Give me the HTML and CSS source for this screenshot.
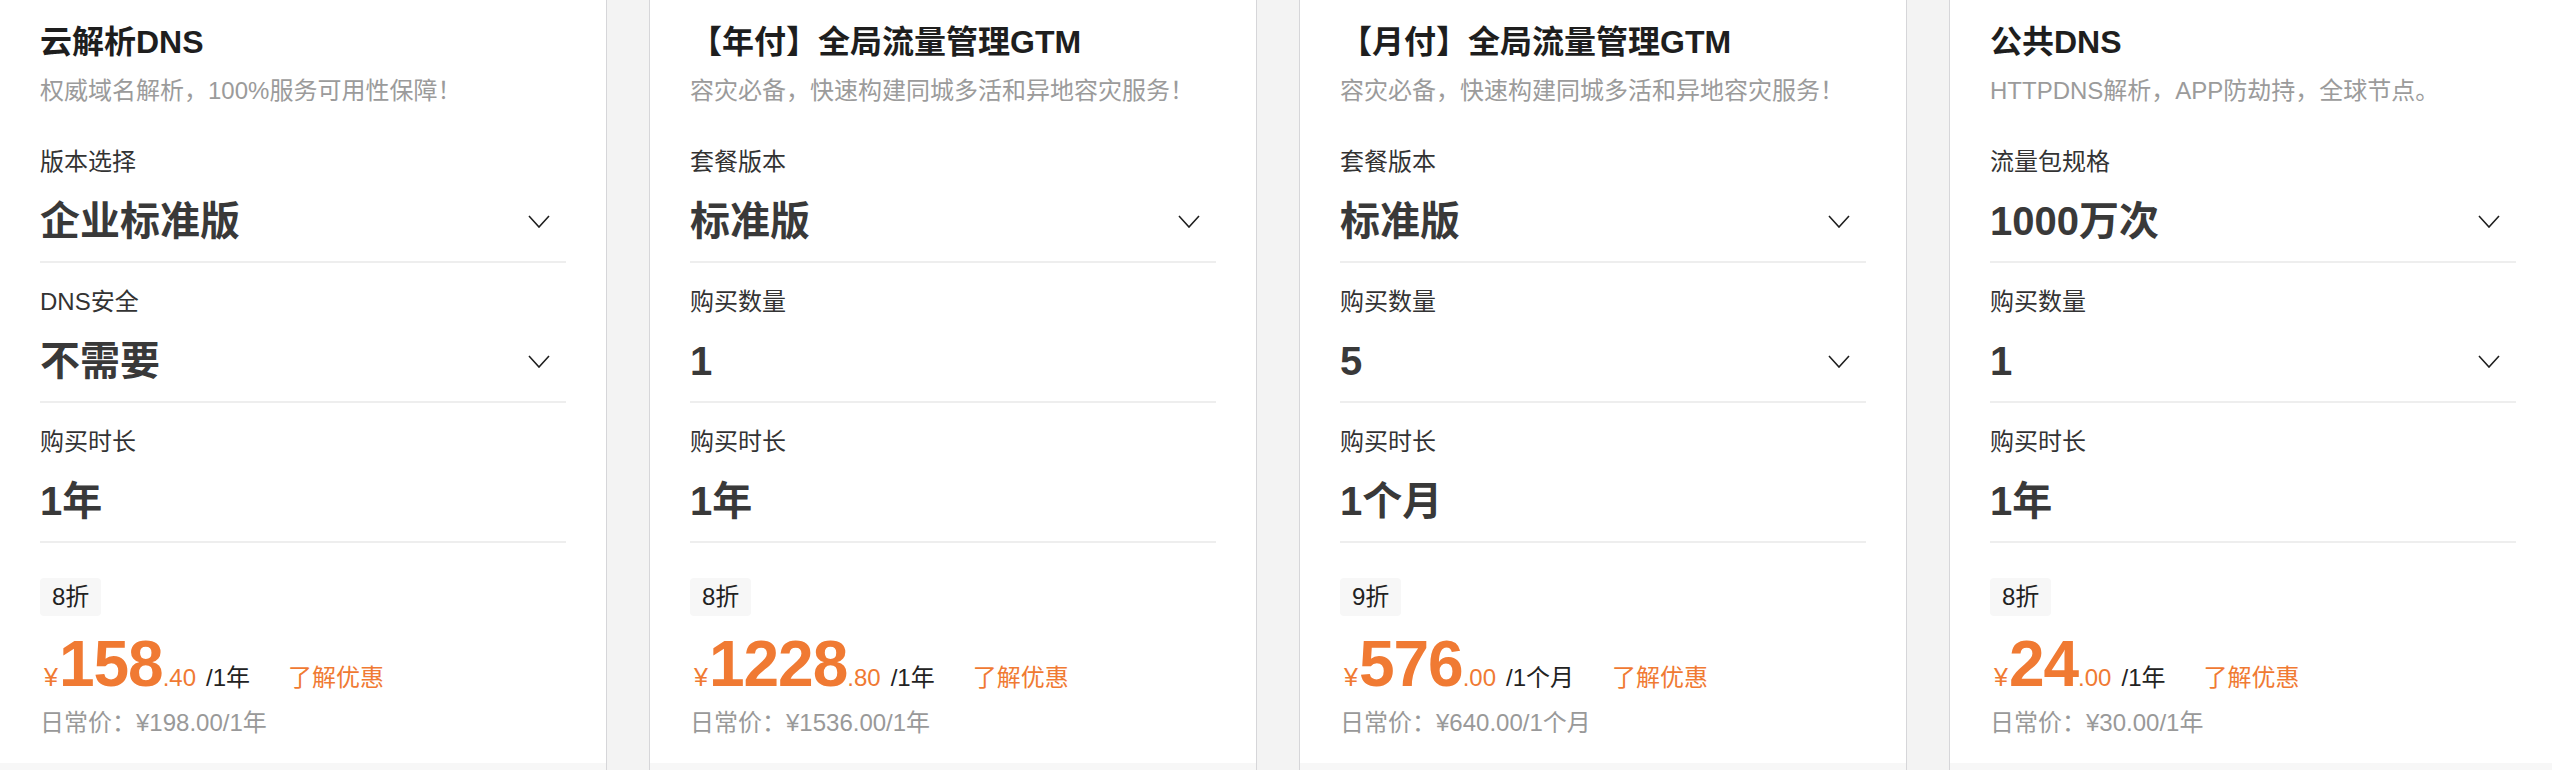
FILE: index.html
```html
<!DOCTYPE html>
<html lang="zh-CN">
<head>
<meta charset="utf-8">
<title>产品卡片</title>
<link rel="stylesheet" href="styles.css">
</head>
<body>
<div class="cards">
  <div class="card">
    <div class="card-body">
      <h3 class="title">云解析DNS</h3>
      <p class="desc">权威域名解析，100%服务可用性保障！</p>
      <div class="field">
        <div class="field-label">版本选择</div>
        <div class="field-value"><span>企业标准版</span><svg class="chev" viewBox="0 0 22 13"><polyline points="1,1 11,12 21,1"/></svg></div>
      </div>
      <div class="field">
        <div class="field-label">DNS安全</div>
        <div class="field-value"><span>不需要</span><svg class="chev" viewBox="0 0 22 13"><polyline points="1,1 11,12 21,1"/></svg></div>
      </div>
      <div class="field">
        <div class="field-label">购买时长</div>
        <div class="field-value"><span>1年</span></div>
      </div>
      <div class="price-block">
        <span class="badge">8折</span>
        <div class="price"><span class="yen">¥</span><span class="int">158</span><span class="dec">.40</span><span class="unit">/1年</span><a class="promo">了解优惠</a></div>
        <div class="orig">日常价：¥198.00/1年</div>
      </div>
    </div>
    <div class="card-foot"></div>
  </div>

  <div class="card">
    <div class="card-body">
      <h3 class="title">【年付】全局流量管理GTM</h3>
      <p class="desc">容灾必备，快速构建同城多活和异地容灾服务！</p>
      <div class="field">
        <div class="field-label">套餐版本</div>
        <div class="field-value"><span>标准版</span><svg class="chev" viewBox="0 0 22 13"><polyline points="1,1 11,12 21,1"/></svg></div>
      </div>
      <div class="field">
        <div class="field-label">购买数量</div>
        <div class="field-value"><span>1</span></div>
      </div>
      <div class="field">
        <div class="field-label">购买时长</div>
        <div class="field-value"><span>1年</span></div>
      </div>
      <div class="price-block">
        <span class="badge">8折</span>
        <div class="price"><span class="yen">¥</span><span class="int">1228</span><span class="dec">.80</span><span class="unit">/1年</span><a class="promo">了解优惠</a></div>
        <div class="orig">日常价：¥1536.00/1年</div>
      </div>
    </div>
    <div class="card-foot"></div>
  </div>

  <div class="card">
    <div class="card-body">
      <h3 class="title">【月付】全局流量管理GTM</h3>
      <p class="desc">容灾必备，快速构建同城多活和异地容灾服务！</p>
      <div class="field">
        <div class="field-label">套餐版本</div>
        <div class="field-value"><span>标准版</span><svg class="chev" viewBox="0 0 22 13"><polyline points="1,1 11,12 21,1"/></svg></div>
      </div>
      <div class="field">
        <div class="field-label">购买数量</div>
        <div class="field-value"><span>5</span><svg class="chev" viewBox="0 0 22 13"><polyline points="1,1 11,12 21,1"/></svg></div>
      </div>
      <div class="field">
        <div class="field-label">购买时长</div>
        <div class="field-value"><span>1个月</span></div>
      </div>
      <div class="price-block">
        <span class="badge">9折</span>
        <div class="price"><span class="yen">¥</span><span class="int">576</span><span class="dec">.00</span><span class="unit">/1个月</span><a class="promo">了解优惠</a></div>
        <div class="orig">日常价：¥640.00/1个月</div>
      </div>
    </div>
    <div class="card-foot"></div>
  </div>

  <div class="card">
    <div class="card-body">
      <h3 class="title">公共DNS</h3>
      <p class="desc">HTTPDNS解析，APP防劫持，全球节点。</p>
      <div class="field">
        <div class="field-label">流量包规格</div>
        <div class="field-value"><span>1000万次</span><svg class="chev" viewBox="0 0 22 13"><polyline points="1,1 11,12 21,1"/></svg></div>
      </div>
      <div class="field">
        <div class="field-label">购买数量</div>
        <div class="field-value"><span>1</span><svg class="chev" viewBox="0 0 22 13"><polyline points="1,1 11,12 21,1"/></svg></div>
      </div>
      <div class="field">
        <div class="field-label">购买时长</div>
        <div class="field-value"><span>1年</span></div>
      </div>
      <div class="price-block">
        <span class="badge">8折</span>
        <div class="price"><span class="yen">¥</span><span class="int">24</span><span class="dec">.00</span><span class="unit">/1年</span><a class="promo">了解优惠</a></div>
        <div class="orig">日常价：¥30.00/1年</div>
      </div>
    </div>
    <div class="card-foot"></div>
  </div>
</div>
</body>
</html>
```

FILE: styles.css
```css
* { box-sizing: border-box; }

html, body {
  margin: 0;
  padding: 0;
}

body {
  width: 2552px;
  height: 770px;
  overflow: hidden;
  background: #f3f3f3;
  font-family: "Liberation Sans", "Noto Sans CJK SC", sans-serif;
  color: #333;
}

.cards {
  display: flex;
  gap: 42px;
  margin-left: -1px;
}

.card {
  flex: 0 0 608px;
  width: 608px;
  background: #fff;
  border-left: 1px solid #d6d6d9;
  border-right: 1px solid #d6d6d9;
}

.card-body {
  padding: 20px 40px 23px;
}

.title {
  margin: 0;
  font-size: 32px;
  line-height: 44px;
  font-weight: 600;
  color: #1e1e1e;
}

.desc {
  margin: 10px 0 15px;
  font-size: 24px;
  line-height: 34px;
  color: #9b9b9b;
  white-space: nowrap;
}

.field {
  padding: 22px 0 12px;
  border-bottom: 2px solid #eeeeee;
}

.field-label {
  font-size: 24px;
  line-height: 34px;
  color: #333;
}

.field-value {
  margin-top: 14px;
  display: flex;
  align-items: center;
  justify-content: space-between;
  font-size: 40px;
  line-height: 56px;
  font-weight: 600;
  color: #393939;
}

.chev {
  width: 22px;
  height: 13px;
  margin-right: 16px;
  fill: none;
  stroke: #1f1f1f;
  stroke-width: 1.6;
}

.price-block {
  padding-top: 35px;
  display: flex;
  flex-direction: column;
  align-items: flex-start;
}

.badge {
  display: block;
  height: 38px;
  line-height: 38px;
  padding: 0 12px;
  font-size: 24px;
  color: #222;
  background: #f7f7f7;
  border-radius: 4px;
}

.price {
  margin-top: 16px;
  height: 64px;
  display: flex;
  align-items: baseline;
  color: #f07a33;
}

.price > span, .price > a { line-height: 1; }

.yen {
  font-size: 25px;
  margin-left: 4px;
  margin-right: 1px;
}

.int {
  font-size: 64px;
  font-weight: 700;
  letter-spacing: -1px;
}

.dec {
  font-size: 24px;
}

.unit {
  font-size: 24px;
  color: #222;
  margin-left: 10px;
}

.promo {
  font-size: 24px;
  color: #f07a33;
  margin-left: 38px;
  text-decoration: none;
}

.orig {
  margin-top: 10px;
  font-size: 24px;
  line-height: 34px;
  color: #999;
}

.card-foot {
  height: 7px;
  background: #f7f7f7;
}
```
